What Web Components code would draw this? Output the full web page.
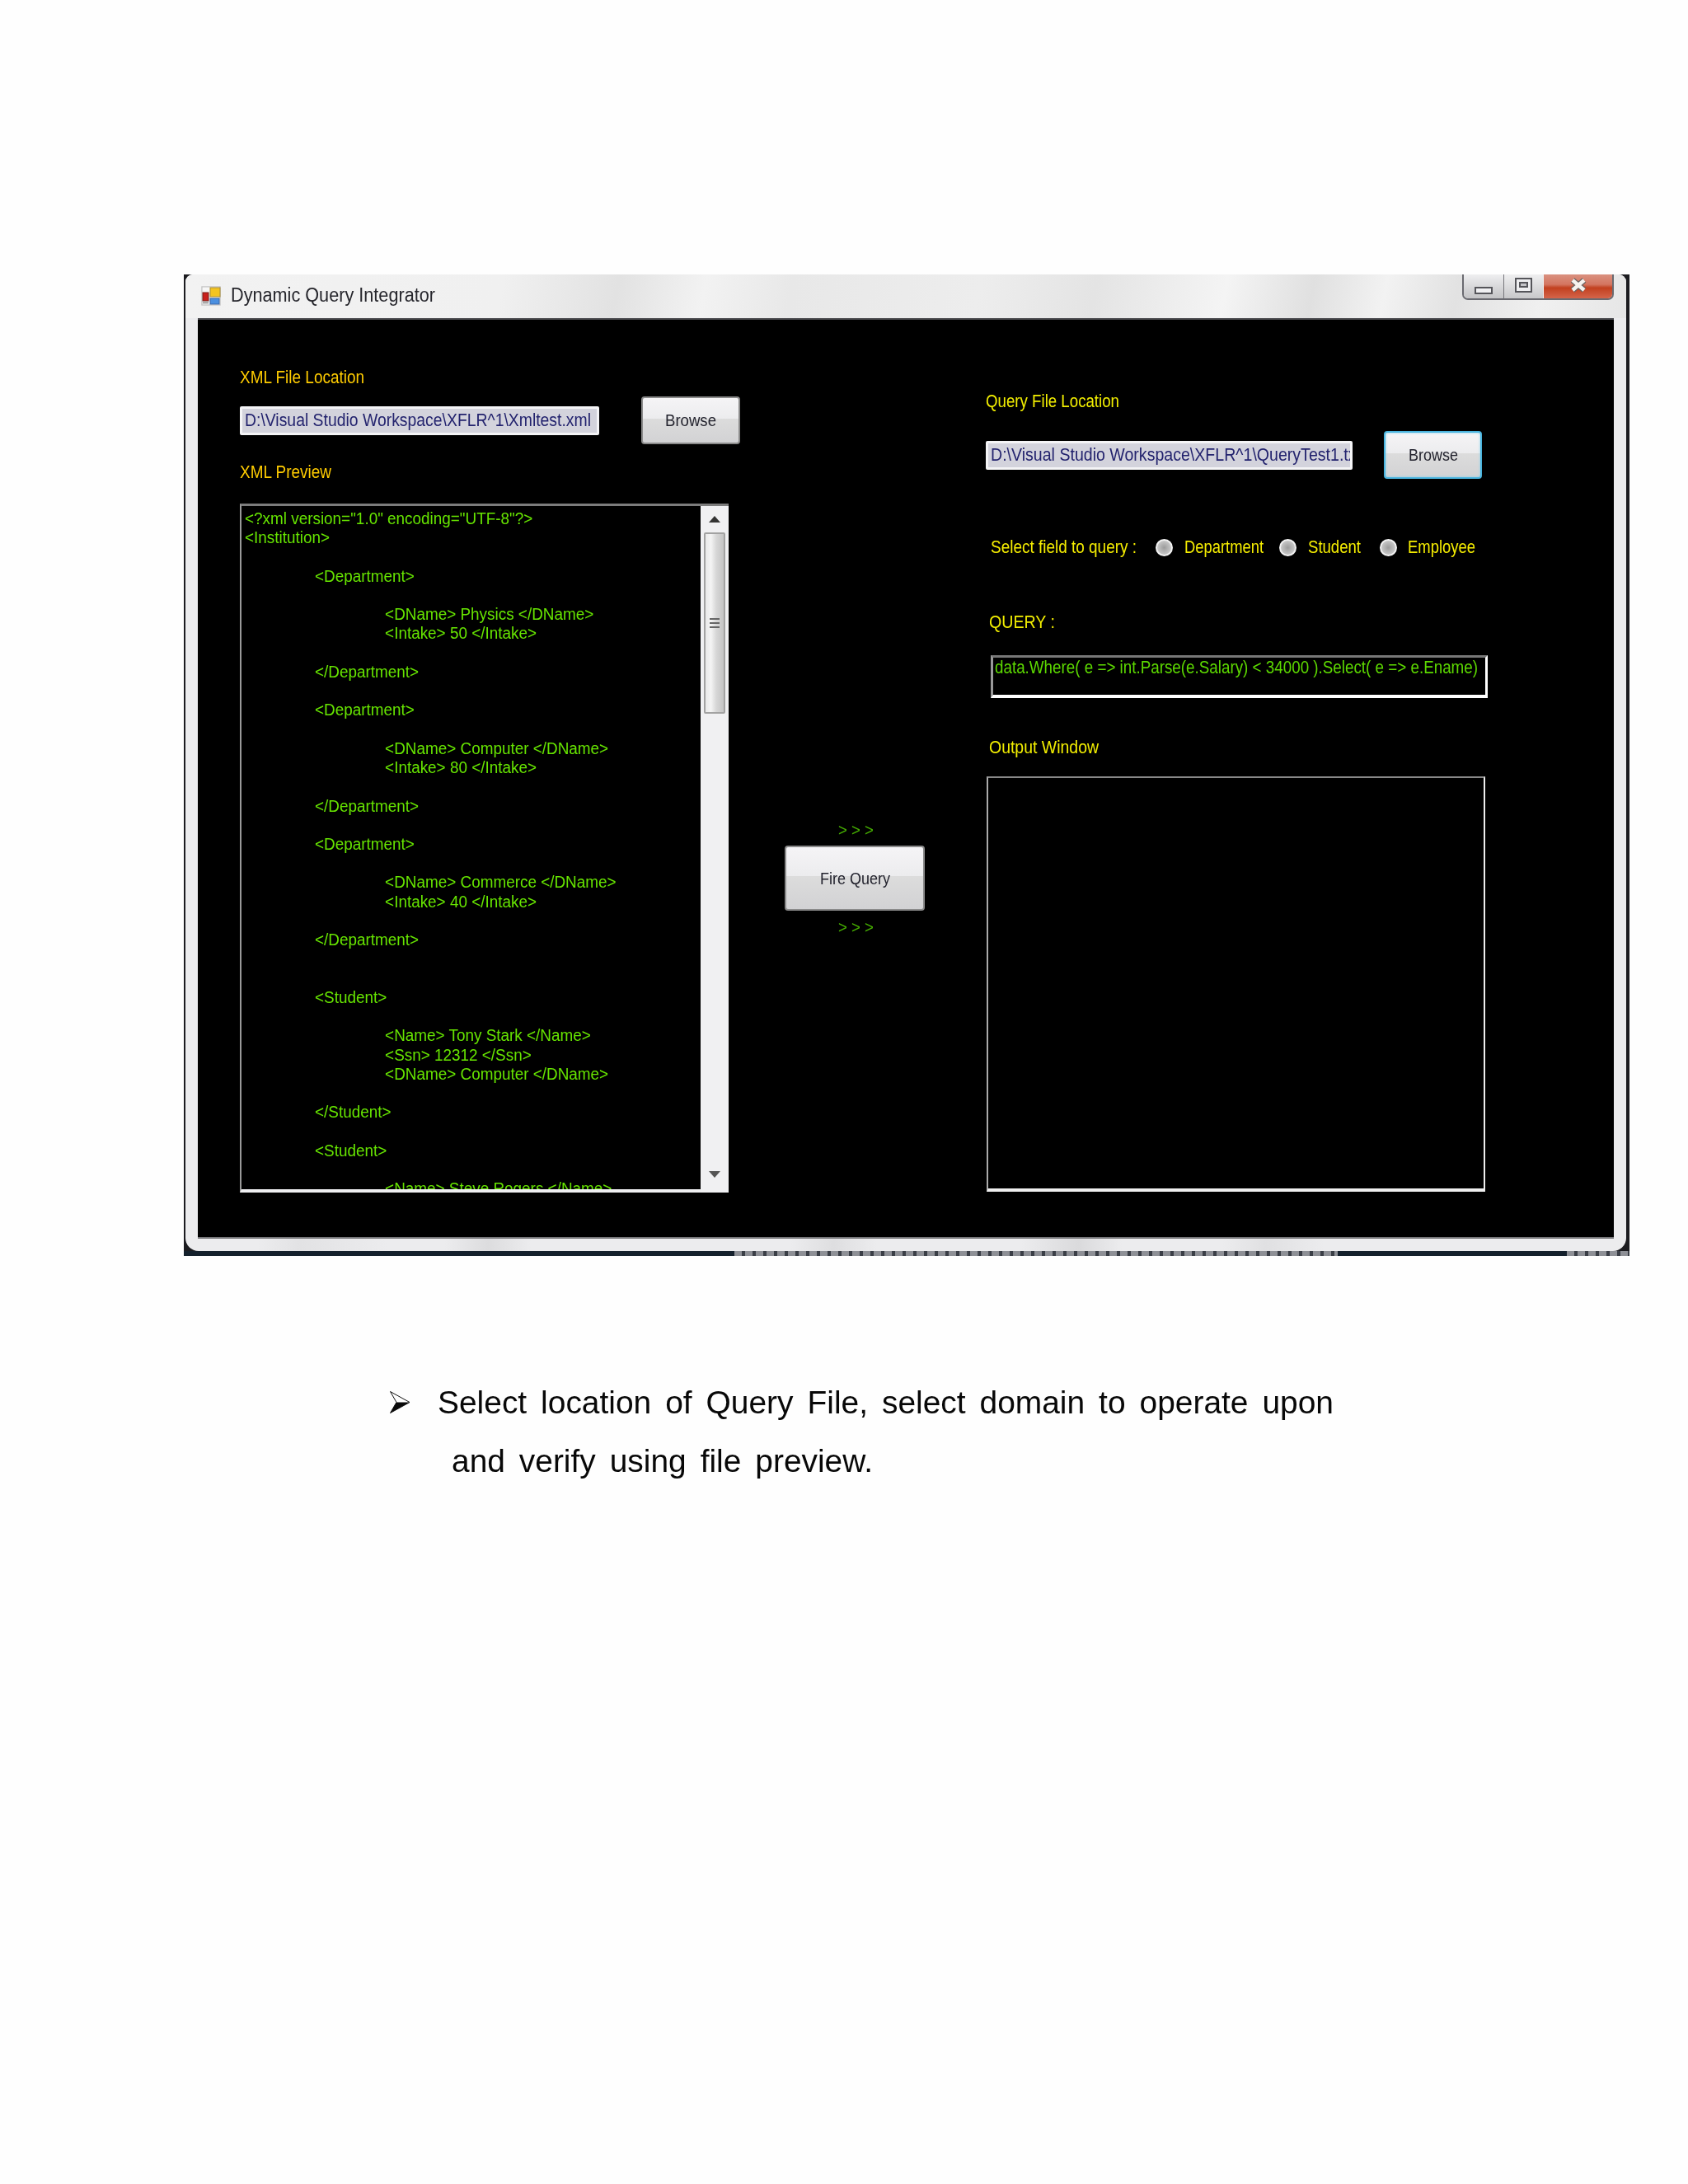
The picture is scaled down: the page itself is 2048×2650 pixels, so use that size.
<!DOCTYPE html>
<html>
<head>
<meta charset="utf-8">
<title>Dynamic Query Integrator</title>
<style>
  html, body { margin: 0; background: #fefefe; }
  body { font-family: "Liberation Sans", Arial, sans-serif; height: 2650px; overflow: hidden; }
  #left { width: 607px; padding-top: 60px; }
  #middle { width: 170px; margin-left: 54px; padding-top: 609px; }
  #right { width: 609px; margin-left: 74px; padding-top: 89px; }
  .yl { --label-color: #ffcc00; }
  .after-path { margin-top: 26px; }
  .gap-13 { margin-top: 13px; }
  .gap-24 { margin-top: 24px; }
  .gap-31 { margin-top: 28px; }
  #radios { margin-top: 71px; margin-left: 6px; }
  #query-label { margin-top: 69px; margin-left: 4px; }
  #query-box { margin-top: 30px; margin-left: 6px; }
  #output-label { margin-top: 50px; margin-left: 4px; }
  #output-box { margin-top: 25px; margin-left: 1px; }
</style>
</head>
<body>
<script type="text/plain" id="xml-text"><?xml version="1.0" encoding="UTF-8"?>
<Institution>

	<Department>

		<DName> Physics </DName>
		<Intake> 50 </Intake>

	</Department>

	<Department>

		<DName> Computer </DName>
		<Intake> 80 </Intake>

	</Department>

	<Department>

		<DName> Commerce </DName>
		<Intake> 40 </Intake>

	</Department>


	<Student>

		<Name> Tony Stark </Name>
		<Ssn> 12312 </Ssn>
		<DName> Computer </DName>

	</Student>

	<Student>

		<Name> Steve Rogers </Name></script>

<app-window>
  <fit-text slot="title" w="248">Dynamic Query Integrator</fit-text>

  <div id="left" slot="left">
    <win-label class="yl" w="151">XML File Location</win-label>
    <path-row class="gap-13" input-width="436" gap="51" button-width="120" text-width="420" label-width="62"
      path="D:\Visual Studio Workspace\XFLR^1\Xmltest.xml"></path-row>
    <win-label class="yl gap-24" w="111">XML Preview</win-label>
    <xml-preview class="gap-31"></xml-preview>
  </div>

  <div id="middle" slot="middle">
    <fire-panel></fire-panel>
  </div>

  <div id="right" slot="right">
    <win-label w="162">Query File Location</win-label>
    <path-row class="after-path" input-width="445" gap="38" button-width="119" text-width="449" label-width="60" focused
      path="D:\Visual Studio Workspace\XFLR^1\QueryTest1.txt"></path-row>
    <radio-row id="radios"></radio-row>
    <win-label id="query-label" w="80">QUERY :</win-label>
    <query-box id="query-box"></query-box>
    <win-label id="output-label" w="133">Output Window</win-label>
    <output-box id="output-box"></output-box>
  </div>
</app-window>

<doc-caption>
  <fit-text slot="first" w="1087">Select location of Query File, select domain to operate upon</fit-text>
  <fit-text slot="second" w="511">and verify using file preview.</fit-text>
</doc-caption>

<script>
// squeezes its text to the width the reference has (the screenshot is stretched)
class FitText extends HTMLElement {
  constructor() {
    super();
    this.attachShadow({ mode: "open" });
    this.shadowRoot.innerHTML = `
      <style>
        :host { display: inline-block; vertical-align: top; }
        span { display: inline-block; white-space: pre; transform-origin: 0 50%; }
      </style>
      <span><slot></slot></span>`;
  }
  connectedCallback() {
    const w = Number(this.getAttribute("w"));
    const span = this.shadowRoot.querySelector("span");
    const natural = span.getBoundingClientRect().width;
    if (natural) span.style.transform = `scaleX(${w / natural})`;
    this.style.width = w + "px";
  }
}

class WinLabel extends HTMLElement {
  constructor() {
    super();
    this.attachShadow({ mode: "open" });
    this.shadowRoot.innerHTML = `
      <style>
        :host { display: block; height: 20px; font-size: 22px; line-height: 20px; color: var(--label-color, #f2ee00); }
      </style>
      <fit-text w="${this.getAttribute("w")}"><slot></slot></fit-text>`;
  }
}
customElements.define("win-label", WinLabel);

class WinButton extends HTMLElement {
  constructor() {
    super();
    this.attachShadow({ mode: "open" });
    this.shadowRoot.innerHTML = `
      <style>
        :host {
          display: flex; align-items: center; justify-content: center; box-sizing: border-box;
          border: 2px solid #8a8a8a; border-radius: 4px; color: #23232e; font-size: 21px;
          background: linear-gradient(#f5f4f6, #ececee 46%, #dcdcdc 47%, #d2d2d4);
        }
        :host([focused]) { border-color: #49b4de; box-shadow: inset 0 0 3px #7fd0ee; }
      </style>
      <slot></slot>`;
  }
}
customElements.define("win-button", WinButton);

class PathRow extends HTMLElement {
  constructor() {
    super();
    this.attachShadow({ mode: "open" });
    const a = (n) => this.getAttribute(n);
    this.shadowRoot.innerHTML = `
      <style>
        :host { display: flex; align-items: center; height: 58px; }
        .input {
          box-sizing: border-box; height: 35px; width: ${a("input-width")}px; padding-left: 3px;
          border: 3px solid #f4f4f6; border-radius: 2px; background: #d3d3dc; color: #23236e;
          font-size: 22px; line-height: 28px; overflow: hidden; white-space: nowrap;
        }
        win-button { width: ${a("button-width")}px; height: 58px; margin-left: ${a("gap")}px; }
      </style>
      <div class="input"><fit-text w="${a("text-width")}">${a("path")}</fit-text></div>
      <win-button ${this.hasAttribute("focused") ? "focused" : ""}><fit-text w="${a("label-width")}">Browse</fit-text></win-button>`;
  }
}
customElements.define("path-row", PathRow);

class XmlPreview extends HTMLElement {
  constructor() {
    super();
    this.attachShadow({ mode: "open" });
    this.shadowRoot.innerHTML = `
      <style>
        :host {
          display: flex; box-sizing: border-box; width: 593px; height: 836px;
          border-top: 3px solid #7c7c7c; border-left: 2px solid #9a9a9a; border-bottom: 4px solid #efeff1;
          background: #000;
        }
        .text { flex: 1; overflow: hidden; padding: 4px 0 0 4px; }
        pre {
          margin: 0; font: 20px/23.23px "Liberation Sans", Arial, sans-serif; color: #66e400;
          tab-size: 90px; transform: scaleX(.945); transform-origin: 0 0;
        }
        .bar {
          display: flex; flex-direction: column; align-items: center; width: 34px; margin-bottom: -4px;
          background: #f0f0f2; box-sizing: border-box;
        }
        .arrow { height: 32px; display: flex; align-items: center; justify-content: center; }
        .thumb {
          box-sizing: border-box; width: 26px; height: 220px; border: 2px solid #a2a2a2; border-radius: 2px;
          background: linear-gradient(90deg, #e9e9e9, #f4f4f4 30%, #d6d6d6 60%, #c4c4c4);
          display: flex; align-items: center; justify-content: center;
        }
        .spacer { flex: 1; }
      </style>
      <div class="text"><pre></pre></div>
      <div class="bar">
        <div class="arrow"><svg width="14" height="8" viewBox="0 0 14 8"><path d="M7 0 L14 8 H0 Z" fill="#333"/></svg></div>
        <div class="thumb"><svg width="12" height="14" viewBox="0 0 12 14"><path d="M0 2 H12 M0 7 H12 M0 12 H12" stroke="#666" stroke-width="2"/></svg></div>
        <div class="spacer"></div>
        <div class="arrow" style="padding-bottom:6px"><svg width="14" height="8" viewBox="0 0 14 8"><path d="M0 0 H14 L7 8 Z" fill="#555"/></svg></div>
      </div>`;
    this.shadowRoot.querySelector("pre").textContent = document.getElementById("xml-text").textContent;
  }
}
customElements.define("xml-preview", XmlPreview);

class FirePanel extends HTMLElement {
  constructor() {
    super();
    this.attachShadow({ mode: "open" });
    this.shadowRoot.innerHTML = `
      <style>
        :host { display: flex; flex-direction: column; align-items: flex-start; color: #46b000; font-size: 21px; }
        .arrows { height: 20px; line-height: 20px; margin-left: 65px; }
        win-button { width: 170px; height: 79px; margin: 9px 0 10px; }
      </style>
      <div class="arrows"><fit-text w="43">&gt; &gt; &gt;</fit-text></div>
      <win-button><fit-text w="85">Fire Query</fit-text></win-button>
      <div class="arrows"><fit-text w="43">&gt; &gt; &gt;</fit-text></div>`;
  }
}
customElements.define("fire-panel", FirePanel);

class RadioRow extends HTMLElement {
  constructor() {
    super();
    this.attachShadow({ mode: "open" });
    const radio = (label, w, gap, pad) => `
      <i style="margin-left:${gap}px"></i><fit-text style="margin-left:${pad}px" w="${w}">${label}</fit-text>`;
    this.shadowRoot.innerHTML = `
      <style>
        :host { display: flex; align-items: center; height: 24px; font-size: 22px; line-height: 24px; color: #f6ee00; }
        i {
          width: 21px; height: 21px; border-radius: 50%; flex: none; box-sizing: border-box;
          border: 2px solid #f2f2f2; background: radial-gradient(circle, #9c9c9c, #c8c8c8 70%, #eee);
        }
      </style>
      <fit-text w="177">Select field to query :</fit-text>
      ${radio("Department", 96, 23, 14)}${radio("Student", 64, 19, 14)}${radio("Employee", 82, 23, 13)}`;
  }
}
customElements.define("radio-row", RadioRow);

class QueryBox extends HTMLElement {
  constructor() {
    super();
    this.attachShadow({ mode: "open" });
    this.shadowRoot.innerHTML = `
      <style>
        :host {
          display: block; box-sizing: border-box; width: 603px; height: 52px; padding: 0 0 0 2px;
          border: 3px solid #fff; border-top-color: #777; border-left-color: #999; border-bottom-width: 4px;
          background: #000; color: #5cd800; font-size: 21.5px; line-height: 24px; overflow: hidden;
        }
      </style>
      <fit-text w="586">data.Where( e =&gt; int.Parse(e.Salary) &lt; 34000 ).Select( e =&gt; e.Ename)</fit-text>`;
  }
}
customElements.define("query-box", QueryBox);

class OutputBox extends HTMLElement {
  constructor() {
    super();
    this.attachShadow({ mode: "open" });
    this.shadowRoot.innerHTML = `
      <style>
        :host {
          display: block; box-sizing: border-box; width: 605px; height: 504px;
          border: 2px solid #eee; border-top-color: #888; border-left-color: #aaa; border-bottom-width: 4px;
          background: #000;
        }
      </style>`;
  }
}
customElements.define("output-box", OutputBox);

class AppWindow extends HTMLElement {
  constructor() {
    super();
    this.attachShadow({ mode: "open" });
    this.shadowRoot.innerHTML = `
      <style>
        :host {
          display: flex; flex-direction: column; box-sizing: border-box; width: 1754px; height: 1191px;
          margin: 333px 0 0 223px; padding: 0 4px 0 2px;
          background: #1c1c20; filter: blur(.45px);
        }
        .chrome {
          flex: 1; display: flex; flex-direction: column; min-height: 0; padding: 0 15px 15px 15px;
          border-radius: 9px 9px 16px 16px;
          background:
            linear-gradient(90deg, transparent 5%, #e2e2e4 8%, transparent 14%, transparent 18%, #dcdcde 21%, transparent 24%,
              transparent 42%, #dedee0 45%, transparent 48%, transparent 58%, #dadadc 62%, transparent 65%,
              transparent 72%, #e0e0e2 75%, transparent 79%) bottom / 100% 15px no-repeat,
            #ececee;
        }
        .title {
          display: flex; align-items: flex-start; height: 53px; margin: 0 -15px 0 -15px; padding: 0 15px 0 19px;
          font-size: 23px; color: #26262c; box-sizing: border-box; border-radius: 9px 9px 0 0;
          background: linear-gradient(101deg, #f2f2f2 0%, #f0f0f0 22%, #e2e2e2 30%, #f2f2f2 36%, #e8e8e8 42%, #ededed 55%,
            #e4e4e4 63%, #f4f4f4 72%, #e0e0e0 78%, #f2f2f2 83%, #e2e2e2 88%, #f0f0f0 94%, #e6e6e6);
        }
        .icon { margin-top: 14px; flex: none; }
        .title-text { margin: 12px 0 0 12px; line-height: 26px; }
        .caps { display: flex; margin-left: auto; height: 31px; flex: none;
          border: 2px solid #6a6a70; border-top: 0; border-radius: 0 0 7px 7px; box-sizing: border-box; overflow: hidden; }
        .caps div { display: flex; align-items: center; justify-content: center; box-sizing: border-box; }
        .min { width: 49px; border-right: 1px solid #77777c; background: linear-gradient(#efeff0, #d6d6d8 55%, #c4c4c6); padding-top: 10px; }
        .max { width: 48px; border-right: 1px solid #f2f2f2; background: linear-gradient(#efeff0, #dadadc 55%, #c8c8ca); padding-bottom: 3px; }
        .close { width: 83px; background: linear-gradient(#da9180, #d47560 42%, #c2401f 56%, #d4644a); padding-bottom: 3px; }
        .client {
          flex: 1; display: flex; min-height: 0; background: #000; padding-left: 51px;
          border-top: 2px solid #4c4c50; border-bottom: 2px solid #77777a; box-sizing: border-box;
        }
        .strip {
          flex: none; height: 6px; margin: 0 -4px 0 -2px;
          background:
            repeating-linear-gradient(90deg, #8e9096 0 9px, #3a3e46 9px 13px) 668px 0 / 732px 6px no-repeat,
            repeating-linear-gradient(90deg, #8e9096 0 9px, #3a3e46 9px 13px) 1678px 0 / 76px 6px no-repeat,
            #14202c;
        }
      </style>
      <div class="chrome">
        <div class="title">
          <svg class="icon" width="24" height="24" viewBox="0 0 24 24">
            <rect x="0" y="0" width="24" height="24" fill="#e4e4e4"/>
            <rect x="1" y="1" width="22" height="22" fill="#f6f6f6" stroke="#bdbdbd"/>
            <rect x="11" y="2" width="12" height="11" fill="#f3c421" stroke="#a98c34"/>
            <rect x="2" y="8" width="7" height="10" fill="#c9201c" stroke="#7a1a14"/>
            <rect x="11" y="15" width="11" height="7" fill="#4a8fe0" stroke="#3a66a8"/>
            <path d="M2 20 H9" stroke="#aaa" stroke-width="3"/>
          </svg>
          <div class="title-text"><slot name="title"></slot></div>
          <div class="caps">
            <div class="min"><svg width="22" height="9" viewBox="0 0 22 9"><rect x="1" y="1" width="20" height="7" fill="#f0f0f2" stroke="#55555a" stroke-width="2"/></svg></div>
            <div class="max"><svg width="21" height="18" viewBox="0 0 21 18"><rect x="1" y="1" width="19" height="16" fill="#eeeef0" stroke="#55555a" stroke-width="2"/><rect x="6" y="6" width="9" height="5" fill="#c4c4c8" stroke="#55555a" stroke-width="2"/></svg></div>
            <div class="close"><svg width="20" height="18" viewBox="0 0 20 18"><path d="M3 3 L17 15 M17 3 L3 15" stroke="#6a6260" stroke-width="7"/><path d="M3 3 L17 15 M17 3 L3 15" stroke="#f6f2ee" stroke-width="4.5"/></svg></div>
          </div>
        </div>
        <div class="client">
          <slot name="left"></slot>
          <slot name="middle"></slot>
          <slot name="right"></slot>
        </div>
      </div>
      <div class="strip"></div>`;
  }
}
customElements.define("app-window", AppWindow);

class DocCaption extends HTMLElement {
  constructor() {
    super();
    this.attachShadow({ mode: "open" });
    this.shadowRoot.innerHTML = `
      <style>
        :host {
          display: flex; margin: 143px 0 0 473px; color: #080808;
          font-size: 38px; line-height: 71px; word-spacing: 6px; filter: blur(.3px);
        }
        svg { flex: none; margin-top: 21px; }
        .lines { margin-left: 33px; display: flex; flex-direction: column; }
        .second { margin-left: 17px; }
      </style>
      <svg width="25" height="27" viewBox="0 0 25 27">
        <path d="M.5 .5 L24 13.5 L.5 26.5 L8 13.5 Z" fill="#fff" stroke="#111"/>
        <path d="M8 13.5 L24 13.5 L.5 26.5 Z" fill="#0a0a0a"/>
      </svg>
      <div class="lines">
        <div><slot name="first"></slot></div>
        <div class="second"><slot name="second"></slot></div>
      </div>`;
  }
}
customElements.define("doc-caption", DocCaption);

// last on purpose: it measures, so the fonts of the elements around it must be in place
customElements.define("fit-text", FitText);
</script>
</body>
</html>
